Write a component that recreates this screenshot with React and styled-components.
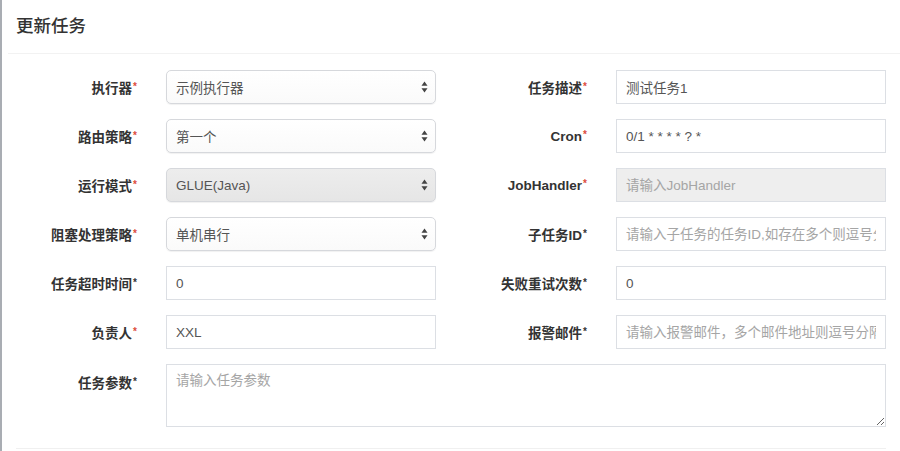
import React from 'react';
import styled, { createGlobalStyle } from 'styled-components';

const GlobalStyle = createGlobalStyle`
  html, body {
    margin: 0;
    padding: 0;
    background: #fff;
  }
  body {
    font-family: "Liberation Sans", "Noto Sans CJK SC", Arial, sans-serif;
    color: #333;
  }
`;

const Page = styled.div`
  width: 900px;
  height: 451px;
  box-sizing: border-box;
  box-shadow: inset 2px 0 0 #a9adb3;
  overflow: hidden;
`;

const Header = styled.div`
  margin-left: 8px;
  padding: 15px 0 15px 8px;
  border-bottom: 1px solid #f2f2f2;
`;

const Title = styled.h4`
  margin: 0;
  font-size: 17.5px;
  line-height: 23px;
  font-weight: 500;
  color: #333;
`;

const Body = styled.div`
  padding: 16px 0 21px;
`;

const FormGrid = styled.div`
  display: grid;
  grid-template-columns: 450px 450px;
  row-gap: 15px;
`;

const Field = styled.div`
  display: grid;
  grid-template-columns: ${p => (p.$wide ? '150px 720px' : '150px 270px')};
  column-gap: 16px;
  align-items: ${p => (p.$wide ? 'start' : 'center')};
  grid-column: ${p => (p.$wide ? '1 / span 2' : 'auto')};
`;

const Label = styled.label`
  text-align: right;
  padding-right: 13px;
  font-size: 13.5px;
  font-weight: 700;
  color: #333;
  white-space: nowrap;
  padding-top: ${p => (p.$wide ? '8px' : '0')};
`;

const Star = styled.span`
  font-size: 10px;
  margin-left: 1px;
  vertical-align: 3px;
  color: ${p => (p.$red ? '#dd4b39' : '#333')};
`;

const Input = styled.input`
  box-sizing: border-box;
  width: 100%;
  height: 34px;
  padding: 0 9px;
  border: 1px solid #dcdfe4;
  border-radius: 0;
  font-family: inherit;
  font-size: 13.5px;
  color: #555;
  background: ${p => (p.disabled ? '#eeeeee' : '#fff')};
  outline: none;

  &::placeholder {
    color: #a5a5a5;
  }
`;

const SelectBox = styled.div`
  box-sizing: border-box;
  height: 34px;
  display: flex;
  align-items: center;
  justify-content: space-between;
  padding: 0 7px 0 9px;
  border: 1px solid #d6d8dc;
  border-radius: 5px;
  font-size: 13.5px;
  color: #555;
  background: ${p => (p.$disabled ? 'linear-gradient(#ededed, #e6e6e6)' : 'linear-gradient(#fff, #fafafa)')};
  box-shadow: 0 1px 1px rgba(0, 0, 0, 0.06);
`;

const TextArea = styled.textarea`
  box-sizing: border-box;
  width: 100%;
  height: 63px;
  padding: 6px 9px;
  border: 1px solid #dcdfe4;
  border-radius: 0;
  font-family: inherit;
  font-size: 13.5px;
  line-height: 20px;
  color: #555;
  resize: vertical;
  outline: none;

  &::placeholder {
    color: #a5a5a5;
  }
`;

const Footer = styled.div`
  margin: 0 14px 0 16px;
  border-top: 1px solid #f0f0f0;
`;

const Arrows = () => (
  <svg width="7" height="12" viewBox="0 0 7 12">
    <path d="M3.5 0.5 L6.5 4.8 L0.5 4.8 Z" fill="#444" />
    <path d="M3.5 11.5 L6.5 7.2 L0.5 7.2 Z" fill="#444" />
  </svg>
);

const Select = ({ value, disabled }) => (
  <SelectBox $disabled={disabled}>
    <span>{value}</span>
    <Arrows />
  </SelectBox>
);

const FieldRow = ({ label, red, wide, children }) => (
  <Field $wide={wide}>
    <Label $wide={wide}>
      {label}
      <Star $red={red}>*</Star>
    </Label>
    {children}
  </Field>
);

export default function App() {
  return (
    <Page>
      <GlobalStyle />
      <Header>
        <Title>更新任务</Title>
      </Header>
      <Body>
        <FormGrid>
          <FieldRow label="执行器" red>
            <Select value="示例执行器" />
          </FieldRow>
          <FieldRow label="任务描述" red>
            <Input defaultValue="测试任务1" />
          </FieldRow>

          <FieldRow label="路由策略" red>
            <Select value="第一个" />
          </FieldRow>
          <FieldRow label="Cron" red>
            <Input defaultValue="0/1 * * * * ? *" />
          </FieldRow>

          <FieldRow label="运行模式" red>
            <Select value="GLUE(Java)" disabled />
          </FieldRow>
          <FieldRow label="JobHandler" red>
            <Input placeholder="请输入JobHandler" disabled />
          </FieldRow>

          <FieldRow label="阻塞处理策略" red>
            <Select value="单机串行" />
          </FieldRow>
          <FieldRow label="子任务ID">
            <Input placeholder="请输入子任务的任务ID,如存在多个则逗号分隔" />
          </FieldRow>

          <FieldRow label="任务超时时间">
            <Input defaultValue="0" />
          </FieldRow>
          <FieldRow label="失败重试次数">
            <Input defaultValue="0" />
          </FieldRow>

          <FieldRow label="负责人" red>
            <Input defaultValue="XXL" />
          </FieldRow>
          <FieldRow label="报警邮件">
            <Input placeholder="请输入报警邮件，多个邮件地址则逗号分隔" />
          </FieldRow>

          <FieldRow label="任务参数" wide>
            <TextArea placeholder="请输入任务参数" />
          </FieldRow>
        </FormGrid>
      </Body>
      <Footer />
    </Page>
  );
}
